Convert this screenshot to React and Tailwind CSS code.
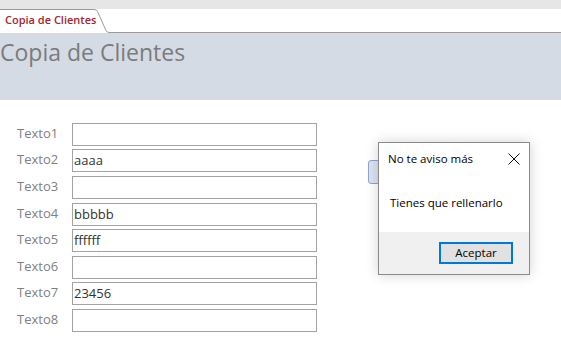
const rows = [
  { label: 'Texto1', value: '', h: 'h-[26px]' },
  { label: 'Texto2', value: 'aaaa', h: 'h-[27px]' },
  { label: 'Texto3', value: '', h: 'h-[27px]' },
  { label: 'Texto4', value: 'bbbbb', h: 'h-[26px]' },
  { label: 'Texto5', value: 'ffffff', h: 'h-[27px]' },
  { label: 'Texto6', value: '', h: 'h-[26px]' },
  { label: 'Texto7', value: '23456', h: 'h-[27px]' },
  { label: 'Texto8', value: '', h: 'h-[26px]' },
];

const TabStrip = () => (
  <div className="flex h-[24px] bg-white">
    <div className="relative w-[109px] shrink-0">
      <svg className="absolute inset-0" width="109" height="24" viewBox="0 0 109 24">
        <path d="M0 0.5 H94 Q96.5 0.5 97.5 2.5 L106 21.5 Q107 23.5 109 23.5" fill="none" stroke="#9a9a9a" strokeWidth="1" />
      </svg>
      <span className="relative block pl-[5px] pt-[4px] text-[11px] font-semibold leading-[14px] text-[#a4262c]">
        Copia de Clientes
      </span>
    </div>
    <div className="flex-1 border-b border-[#9a9a9a]" />
  </div>
);

const Dialog = () => (
  <div className="absolute left-[378px] top-[142px] flex h-[133px] w-[152px] flex-col border border-[#8a8a8a] bg-white shadow-[0_0_12px_rgba(0,0,0,0.18)] font-['Open_Sans',sans-serif] text-[11.5px] text-black">
    <div className="flex h-[31px] items-center justify-between pl-[9px] pr-[9px]">
      <span>No te aviso más</span>
      <svg width="12" height="12" viewBox="0 0 12 12">
        <path d="M0.5 0.5 L11.5 11.5 M11.5 0.5 L0.5 11.5" stroke="#111" strokeWidth="1" />
      </svg>
    </div>
    <div className="flex h-[58px] items-center pl-[11px]">Tienes que rellenarlo</div>
    <div className="flex flex-1 items-start justify-end bg-[#f0f0f0] pr-[16px] pt-[10px]">
      <button className="flex h-[22px] w-[74px] items-center justify-center border-2 border-[#0078d7] bg-[#e1e1e1] text-[11.5px]">
        Aceptar
      </button>
    </div>
  </div>
);

export default function App() {
  return (
    <div className="relative h-[352px] w-[561px] overflow-hidden bg-white font-['Open_Sans',sans-serif]">
      <div className="h-[9px] bg-[#e6e6e6]" />
      <TabStrip />
      <div className="h-[67px] bg-[#d5dbe5] pt-[4px]">
        <h1 className="text-[23px] leading-[30px] text-[#7b7b7b]">Copia de Clientes</h1>
      </div>
      <div className="flex gap-[51px] pt-[23px]">
        <div className="flex flex-col">
          {rows.map((r) => (
            <div key={r.label} className={`flex ${r.h}`}>
              <span className="w-[72px] pl-[17px] text-[13px] leading-[20px] text-[#7f7f7f]">{r.label}</span>
              <div className="h-[23px] w-[245px] border border-[#a3a3a3] bg-white pl-[1px] text-[13px] leading-[20px] text-[#333]">
                {r.value}
              </div>
            </div>
          ))}
        </div>
        <div className="pt-[37px]">
          <div className="h-[24px] w-[40px] rounded-[3px] border border-[#8ea6d2] bg-[#dce3f1]" />
        </div>
      </div>
      <Dialog />
    </div>
  );
}
